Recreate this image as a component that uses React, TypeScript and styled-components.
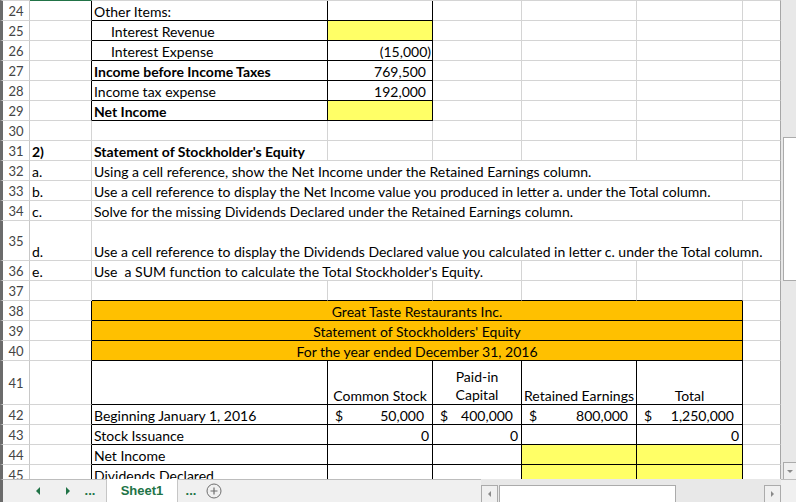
import React from "react";
import styled, { createGlobalStyle } from "styled-components";

const GlobalStyle = createGlobalStyle`
  html, body {
    margin: 0;
    padding: 0;
    background: #ffffff;
  }
  body {
    font-family: Lato, "Open Sans", "Liberation Sans", sans-serif;
  }
`;

const BLACK = "#000000";
const GREEN = "#217346";
const GRID = "#d4d4d4";
const YELLOW = "#ffff66";
const ORANGE = "#ffc000";
const FONT_SIZE = 14;

// widths of row header + columns A..G
const COLS = [30, 62, 236, 105, 89, 115, 106, 38];

type CellSpec = {
  text?: React.ReactNode;
  span?: number;
  align?: "left" | "right" | "center";
  bold?: boolean;
  indent?: number;
  fill?: string;
  right?: string;
  bottom?: string;
  padRight?: number;
  acct?: string;
  wrap?: boolean;
};

type RowSpec = {
  n?: number;
  h: number;
  cells: CellSpec[];
};

const Window = styled.div`
  width: 796px;
  height: 502px;
  display: flex;
  flex-direction: column;
  overflow: hidden;
  background: #ffffff;
`;

const Main = styled.div`
  display: flex;
  height: 479px;
`;

const Sheet = styled.div`
  width: 781px;
  height: 479px;
  overflow: hidden;
`;

const Grid = styled.div<{ $rows: string }>`
  display: grid;
  grid-template-columns: ${COLS.map((c) => `${c}px`).join(" ")};
  grid-template-rows: ${(p) => p.$rows};
`;

const RowHead = styled.div`
  box-sizing: border-box;
  border-left: 3px solid #6b6b6b;
  border-right: 1px solid #c8c8c8;
  border-bottom: 1px solid ${GRID};
  display: flex;
  align-items: center;
  justify-content: center;
  font-size: 13px;
  color: #444444;
  overflow: hidden;
`;

const Cell = styled.div<{
  $span: number;
  $align: string;
  $bold: boolean;
  $indent: number;
  $fill: string;
  $right: string;
  $bottom: string;
  $padRight: number;
  $wrap: boolean;
  $last: boolean;
}>`
  box-sizing: border-box;
  grid-column: span ${(p) => p.$span};
  display: flex;
  flex-direction: column;
  justify-content: flex-end;
  align-items: ${(p) =>
    p.$align === "right" ? "flex-end" : p.$align === "center" ? "center" : "flex-start"};
  text-align: ${(p) => p.$align};
  padding: 0 ${(p) => p.$padRight}px 0 ${(p) => 2 + p.$indent}px;
  background: ${(p) => p.$fill};
  border-right: 1px solid ${(p) => (p.$last ? "#a6a6a6" : p.$right)};
  border-bottom: 1px solid ${(p) => p.$bottom};
  font-size: ${FONT_SIZE}px;
  line-height: ${(p) => (p.$wrap ? 18 : 16)}px;
  font-weight: ${(p) => (p.$bold ? 700 : 400)};
  color: #000000;
  white-space: ${(p) => (p.$wrap ? "normal" : "pre")};
  overflow: hidden;
`;

const Acct = styled.div`
  align-self: stretch;
  display: flex;
  justify-content: space-between;
  padding: 0 6px 0 5px;
`;

const VScroll = styled.div`
  width: 15px;
  height: 479px;
  background: #e8e8e8;
  display: flex;
  flex-direction: column;
  align-items: flex-end;
`;

const VThumb = styled.div`
  box-sizing: border-box;
  margin-top: 137px;
  width: 13px;
  height: 144px;
  background: #ffffff;
  border: 1px solid #ababab;
  border-right: none;
`;

const VButton = styled.div`
  box-sizing: border-box;
  margin-top: auto;
  width: 13px;
  height: 17px;
  border-left: 1px solid #ababab;
  border-top: 1px solid #ababab;
  background: #f0f0f0;
  display: flex;
  align-items: center;
  justify-content: center;
`;

const TabBar = styled.div`
  box-sizing: border-box;
  height: 23px;
  display: flex;
  align-items: stretch;
  background: #f0f0f0;
  border-top: 1px solid #bdbdbd;
  border-left: 3px solid #6b6b6b;
`;

const NavButton = styled.div<{ $w: number }>`
  width: ${(p) => p.$w}px;
  display: flex;
  align-items: center;
  justify-content: center;
`;

const Dots = styled.div<{ $w: number }>`
  width: ${(p) => p.$w}px;
  display: flex;
  align-items: center;
  justify-content: center;
  color: ${GREEN};
  font-family: "Liberation Sans", Arial, sans-serif;
  font-weight: 700;
  font-size: 13px;
  padding-bottom: 2px;
`;

const SheetTab = styled.div`
  box-sizing: border-box;
  width: 72px;
  margin-top: -1px;
  background: #ffffff;
  border-left: 1px solid #c6c6c6;
  border-right: 1px solid #c6c6c6;
  display: flex;
  align-items: center;
  justify-content: center;
  color: ${GREEN};
  font-family: "Liberation Sans", Arial, sans-serif;
  font-weight: 700;
  font-size: 13px;
`;

const Spacer = styled.div`
  flex: 1;
`;

const HScroll = styled.div`
  width: 300px;
  display: flex;
  align-items: flex-end;
  background: #e8e8e8;
  padding-top: 5px;
  margin-right: 15px;
  margin-top: -1px;
`;

const HButton = styled.div`
  box-sizing: border-box;
  width: 17px;
  height: 17px;
  border: 1px solid #ababab;
  border-bottom: none;
  background: #f0f0f0;
  display: flex;
  align-items: center;
  justify-content: center;
`;

const HThumb = styled.div`
  box-sizing: border-box;
  width: 177px;
  height: 17px;
  margin-left: 1px;
  background: #ffffff;
  border: 1px solid #ababab;
  border-bottom: none;
`;

const Tri = ({ dir, color, size = 4 }: { dir: "l" | "r" | "d"; color: string; size?: number }) => {
  const pts =
    dir === "l"
      ? `${size},0 ${size},${size * 2} 0,${size}`
      : dir === "r"
      ? `0,0 0,${size * 2} ${size},${size}`
      : `0,0 ${size * 2},0 ${size},${size}`;
  const w = dir === "d" ? size * 2 : size;
  const h = dir === "d" ? size : size * 2;
  return (
    <svg width={w} height={h} viewBox={`0 0 ${w} ${h}`}>
      <polygon points={pts} fill={color} />
    </svg>
  );
};

const PlusIcon = () => (
  <svg width="16" height="16" viewBox="0 0 16 16">
    <circle cx="8" cy="8" r="7" fill="none" stroke="#6f6f6f" strokeWidth="1" />
    <path d="M8 4.5v7M4.5 8h7" stroke="#6f6f6f" strokeWidth="1.2" />
  </svg>
);

const blank = (): CellSpec => ({});
const fillRow = (cells: CellSpec[]) => {
  const used = cells.reduce((s, c) => s + (c.span ?? 1), 0);
  const out = [...cells];
  for (let i = used; i < 7; i++) out.push(blank());
  return out;
};

const t1 = (label: string, value: CellSpec, opts: Partial<CellSpec> = {}): CellSpec[] =>
  fillRow([
    { right: BLACK },
    { text: label, right: BLACK, bottom: BLACK, ...opts },
    { right: BLACK, bottom: BLACK, align: "right", ...value },
  ]);

const box = { right: BLACK, bottom: BLACK };

const acct = (v: string): CellSpec => ({ ...box, acct: v });
const zero: CellSpec = { ...box, text: "0", align: "right", padRight: 3 };

const rows: RowSpec[] = [
  { h: 1, cells: fillRow([{ bottom: GREEN }]) },
  { n: 24, h: 20, cells: t1("Other Items:", {}) },
  { n: 25, h: 20, cells: t1("Interest Revenue", { fill: YELLOW }, { indent: 17 }) },
  { n: 26, h: 20, cells: t1("Interest Expense", { text: "(15,000)", padRight: 1 }, { indent: 17 }) },
  { n: 27, h: 20, cells: t1("Income before Income Taxes", { text: "769,500", padRight: 6 }, { bold: true }) },
  { n: 28, h: 20, cells: t1("Income tax expense", { text: "192,000", padRight: 6 }) },
  { n: 29, h: 20, cells: t1("Net Income", { fill: YELLOW }, { bold: true }) },
  { n: 30, h: 20, cells: fillRow([]) },
  { n: 31, h: 20, cells: fillRow([{ text: "2)", bold: true }, { text: "Statement of Stockholder's Equity", bold: true }]) },
  {
    n: 32,
    h: 20,
    cells: fillRow([
      { text: "a." },
      { text: "Using a cell reference, show the Net Income under the Retained Earnings column.", span: 5 },
    ]),
  },
  {
    n: 33,
    h: 20,
    cells: fillRow([
      { text: "b." },
      { text: "Use a cell reference to display the Net Income value you produced in letter a. under the Total column.", span: 6 },
    ]),
  },
  {
    n: 34,
    h: 20,
    cells: fillRow([
      { text: "c." },
      { text: "Solve for the missing Dividends Declared under the Retained Earnings column.", span: 5 },
    ]),
  },
  {
    n: 35,
    h: 40,
    cells: fillRow([
      { text: "d." },
      {
        text: "Use a cell reference to display the Dividends Declared value you calculated in letter c. under the Total column.",
        span: 6,
      },
    ]),
  },
  {
    n: 36,
    h: 20,
    cells: fillRow([
      { text: "e." },
      { text: "Use  a SUM function to calculate the Total Stockholder's Equity.", span: 3 },
    ]),
  },
  { n: 37, h: 20, cells: fillRow([{}, { bottom: BLACK }, { bottom: BLACK }, { bottom: BLACK }, { bottom: BLACK }, { bottom: BLACK }]) },
  { n: 38, h: 20, cells: fillRow([{ right: BLACK }, { ...box, span: 5, fill: ORANGE, align: "center", text: "Great Taste Restaurants Inc." }]) },
  { n: 39, h: 20, cells: fillRow([{ right: BLACK }, { ...box, span: 5, fill: ORANGE, align: "center", text: "Statement of Stockholders' Equity" }]) },
  { n: 40, h: 20, cells: fillRow([{ right: BLACK }, { ...box, span: 5, fill: ORANGE, align: "center", text: "For the year ended December 31, 2016" }]) },
  {
    n: 41,
    h: 44,
    cells: fillRow([
      { right: BLACK },
      { ...box },
      { ...box, align: "center", text: "Common Stock" },
      { ...box, align: "center", text: "Paid-in Capital", wrap: true },
      { ...box, align: "center", text: "Retained Earnings" },
      { ...box, align: "center", text: "Total" },
    ]),
  },
  {
    n: 42,
    h: 20,
    cells: fillRow([
      { right: BLACK },
      { ...box, text: "Beginning January 1, 2016" },
      acct("50,000"),
      acct("400,000"),
      acct("800,000"),
      acct("1,250,000"),
    ]),
  },
  { n: 43, h: 20, cells: fillRow([{ right: BLACK }, { ...box, text: "Stock Issuance" }, zero, zero, { ...box }, zero]) },
  {
    n: 44,
    h: 20,
    cells: fillRow([{ right: BLACK }, { ...box, text: "Net Income" }, { ...box }, { ...box }, { ...box, fill: YELLOW }, { ...box, fill: YELLOW }]),
  },
  {
    n: 45,
    h: 20,
    cells: fillRow([
      { right: BLACK },
      { ...box, text: "Dividends Declared" },
      { ...box },
      { ...box },
      { ...box, fill: YELLOW },
      { ...box, fill: YELLOW },
    ]),
  },
];

const SheetCell = ({ c, last }: { c: CellSpec; last: boolean }) => (
  <Cell
    $span={c.span ?? 1}
    $align={c.align ?? "left"}
    $bold={!!c.bold}
    $indent={c.indent ?? 0}
    $fill={c.fill ?? "transparent"}
    $right={c.right ?? GRID}
    $bottom={c.bottom ?? GRID}
    $padRight={c.padRight ?? 2}
    $wrap={!!c.wrap}
    $last={last}
  >
    {c.acct ? (
      <Acct>
        <span>$</span>
        <span>{c.acct}</span>
      </Acct>
    ) : (
      c.text
    )}
  </Cell>
);

export default function App() {
  const template = rows.map((r) => `${r.h}px`).join(" ");
  return (
    <Window>
      <GlobalStyle />
      <Main>
        <Sheet>
          <Grid $rows={template}>
            {rows.map((r, ri) => {
              let col = 0;
              return (
                <React.Fragment key={ri}>
                  <RowHead>{r.n}</RowHead>
                  {r.cells.map((c, ci) => {
                    col += c.span ?? 1;
                    return <SheetCell key={ci} c={c} last={col === 7} />;
                  })}
                </React.Fragment>
              );
            })}
          </Grid>
        </Sheet>
        <VScroll>
          <VThumb />
          <VButton>
            <Tri dir="d" color="#8a8a8a" size={3} />
          </VButton>
        </VScroll>
      </Main>
      <TabBar>
        <NavButton $w={29}>
          <span />
        </NavButton>
        <NavButton $w={12}>
          <Tri dir="l" color={GREEN} />
        </NavButton>
        <NavButton $w={18} />
        <NavButton $w={12}>
          <Tri dir="r" color={GREEN} />
        </NavButton>
        <Dots $w={32}>...</Dots>
        <SheetTab>Sheet1</SheetTab>
        <Dots $w={26}>...</Dots>
        <NavButton $w={20}>
          <PlusIcon />
        </NavButton>
        <Spacer />
        <HScroll>
          <HButton>
            <Tri dir="l" color="#8a8a8a" size={3} />
          </HButton>
          <HThumb />
          <Spacer />
          <HButton>
            <Tri dir="r" color="#8a8a8a" size={3} />
          </HButton>
        </HScroll>
      </TabBar>
    </Window>
  );
}
